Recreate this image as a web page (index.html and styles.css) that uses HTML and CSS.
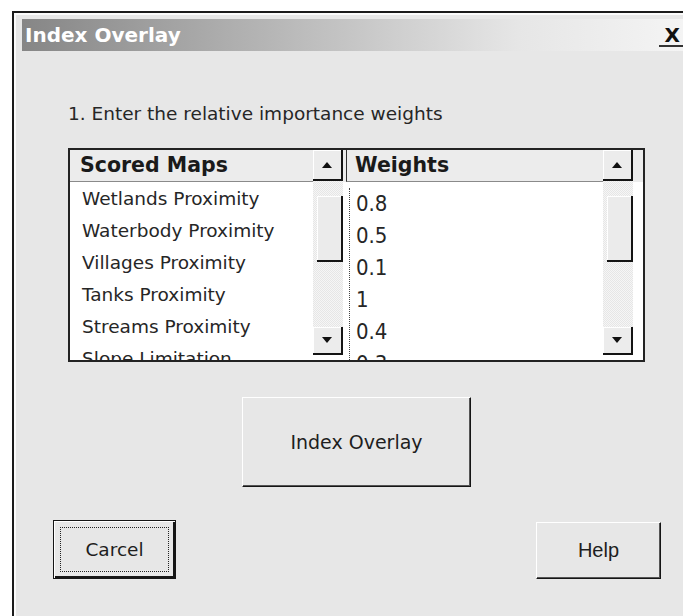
FILE: index.html
```html
<!DOCTYPE html>
<html lang="en">
<head>
<meta charset="utf-8">
<title>Index Overlay</title>
<link rel="stylesheet" href="styles.css">
</head>
<body>
<div class="window">
  <div class="titlebar">
    <span class="title">Index Overlay</span>
    <span class="close">X</span>
  </div>
  <div class="content">
    <div class="group">
      <p class="prompt">1. Enter the relative importance weights</p>
      <div class="listbox">
        <div class="pane pane-names">
          <div class="header">Scored Maps</div>
          <div class="scrollbar">
            <div class="sb-btn sb-up"></div>
            <div class="track"><div class="thumb"></div></div>
            <div class="sb-btn sb-down"></div>
          </div>
          <ul class="rows">
            <li>Wetlands Proximity</li>
            <li>Waterbody Proximity</li>
            <li>Villages Proximity</li>
            <li>Tanks Proximity</li>
            <li>Streams Proximity</li>
            <li>Slope Limitation</li>
          </ul>
        </div>
        <div class="pane pane-weights">
          <div class="header">Weights</div>
          <div class="scrollbar">
            <div class="sb-btn sb-up"></div>
            <div class="track"><div class="thumb"></div></div>
            <div class="sb-btn sb-down"></div>
          </div>
          <ul class="rows">
            <li>0.8</li>
            <li>0.5</li>
            <li>0.1</li>
            <li>1</li>
            <li>0.4</li>
            <li>0.3</li>
          </ul>
        </div>
      </div>
      <button class="btn btn-run" type="button">Index Overlay</button>
    </div>
    <div class="actions">
      <button class="btn btn-default" type="button">Carcel</button>
      <button class="btn btn-help" type="button">Help</button>
    </div>
  </div>
</div>
</body>
</html>
```

FILE: styles.css
```css
* {
  box-sizing: border-box;
}

html,
body {
  margin: 0;
  padding: 0;
}

body {
  width: 683px;
  height: 616px;
  overflow: hidden;
  background: #fff;
  font-family: "DejaVu Sans", sans-serif;
  color: #262626;
}

/* dialog frame */
.window {
  margin: 11px 0 0 12px;
  height: 605px;
  border-top: 2px solid #1b1b1b;
  border-left: 2px solid #1b1b1b;
  box-shadow: inset 2px 2px 0 #fbfbfb;
  background: #e7e7e7;
  padding: 6px 0 0 8px;
  display: flex;
  flex-direction: column;
}

.titlebar {
  flex: none;
  height: 32px;
  padding-left: 3px;
  display: flex;
  align-items: center;
  justify-content: space-between;
  background: linear-gradient(to right, #868686 0%, #b9b9b9 40%, #e6e6e6 75%, #f4f4f4 100%);
}

.title {
  font-weight: bold;
  font-size: 20px;
  color: #fff;
}

.close {
  align-self: flex-end;
  margin-bottom: 4px;
  padding: 0 3px 1px 6px;
  font-weight: bold;
  font-size: 20px;
  line-height: 17px;
  color: #111;
  border-bottom: 2px solid #333;
}

.content {
  flex: 1;
  display: flex;
  flex-direction: column;
  padding-left: 31px;
}

.group {
  margin-left: 15px;
  width: 577px;
  display: flex;
  flex-direction: column;
  align-items: center;
}

.prompt {
  align-self: stretch;
  margin: 52px 0 0;
  font-size: 18.5px;
  line-height: 21px;
}

/* two-column list control */
.listbox {
  align-self: stretch;
  margin-top: 24px;
  height: 214px;
  border: 2px solid #232323;
  background: #fff;
  display: flex;
}

.pane {
  height: 210px;
  overflow: hidden;
  display: grid;
  grid-template-rows: 32px minmax(0, 1fr);
  background: linear-gradient(#ececec 32px, #fff 32px);
}

.pane-names {
  width: 276px;
  grid-template-columns: 1fr 30px 3px;
}

.pane-weights {
  flex: 1;
  grid-template-columns: 1fr 30px 10px;
}

.header {
  grid-column: 1;
  grid-row: 1;
  border-bottom: 1px solid #8a8a8a;
  font-weight: bold;
  font-size: 20.5px;
  line-height: 31px;
  color: #1a1a1a;
  white-space: nowrap;
}

.pane-names .header {
  padding-left: 10px;
}

.pane-weights .header {
  padding-left: 8px;
  border-left: 1px solid #333;
}

.rows {
  grid-column: 1;
  grid-row: 2;
  margin: 0;
  padding: 0;
  list-style: none;
  white-space: nowrap;
  overflow: hidden;
}

.rows li {
  line-height: 32px;
}

.pane-names .rows {
  padding: 1px 0 0 12px;
  font-size: 18.5px;
}

.pane-weights .rows {
  margin: 6px 0 0 3px;
  padding-left: 6px;
  border-left: 1px dotted #444;
  font-family: "DejaVu Sans Condensed", sans-serif;
  font-size: 22px;
  font-weight: 300;
}

/* scrollbars */
.scrollbar {
  grid-column: 2;
  grid-row: 1 / span 2;
  display: flex;
  flex-direction: column;
  padding-bottom: 5px;
  min-height: 0;
}

.sb-btn {
  flex: none;
  display: flex;
  align-items: center;
  justify-content: center;
  background: #ececec;
  border-right: 2px solid #141414;
  border-bottom: 2px solid #141414;
  box-shadow: inset 1px 1px 0 #fff;
}

.sb-up {
  height: 31px;
}

.sb-down {
  height: 28px;
}

.sb-up::before,
.sb-down::before {
  content: "";
  border-left: 5px solid transparent;
  border-right: 5px solid transparent;
}

.sb-up::before {
  border-bottom: 6px solid #111;
}

.sb-down::before {
  border-top: 6px solid #111;
}

.track {
  flex: 1;
  min-height: 0;
  padding-top: 15px;
  background: repeating-conic-gradient(#f6f6f6 0 25%, #e6e6e6 0 50%) 0 0 / 2px 2px;
}

.thumb {
  height: 66px;
  margin-left: 4px;
  background: #ebebeb;
  border-right: 2px solid #141414;
  border-bottom: 2px solid #141414;
  box-shadow: inset 1px 1px 0 #fff;
}

/* push buttons */
.btn {
  display: block;
  margin: 0;
  padding: 0;
  font-family: "DejaVu Sans", sans-serif;
  font-size: 19px;
  color: #1e1e1e;
  background: #e7e7e7;
  border: 1px solid;
  border-color: #fff #151515 #151515 #fff;
  box-shadow: inset -1px -1px 0 #555;
}

.btn-run {
  margin-top: 35px;
  width: 229px;
  height: 90px;
}

.actions {
  margin-top: 33px;
  width: 608px;
  display: flex;
  justify-content: space-between;
  align-items: flex-end;
}

.btn-default {
  width: 123px;
  height: 59px;
  font-size: 18.5px;
  border-color: #151515;
  box-shadow: inset 1px 1px 0 #fff, inset -2px -2px 0 #151515;
  outline: 1px dotted #222;
  outline-offset: -8px;
}

.btn-help {
  width: 125px;
  height: 57px;
  font-family: "Liberation Sans", Arial, sans-serif;
  font-size: 20px;
}
```
